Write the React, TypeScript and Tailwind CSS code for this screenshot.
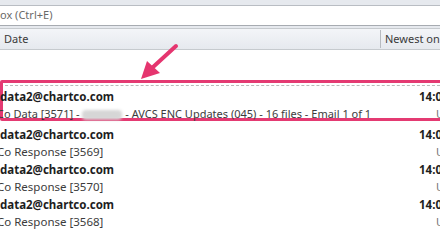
import React from "react";

const font = { fontFamily: '"Noto Sans", "Open Sans", sans-serif' };

function Row({ sub, first }: { sub: React.ReactNode; first?: boolean }) {
  return (
    <div className={first ? "h-[37px] pt-[3px]" : "h-[35px] pt-[4px]"}>
      <div className="relative h-[16px]">
        <span className="absolute left-0 top-0 font-bold text-[11.5px] text-[#1e1e1e] leading-[16px] whitespace-nowrap">data2@chartco.com</span>
        <span className="absolute left-[419px] top-0 font-bold text-[11.5px] text-[#1e1e1e] leading-[16px] whitespace-nowrap">14:05</span>
      </div>
      <div className="relative h-[16px] mt-[1px]">
        <span className={`absolute left-[-3px] top-0 ${first ? "text-[11px]" : "text-[11.5px]"} text-[#3c3c3c] leading-[16px] whitespace-nowrap`}>{sub}</span>
        <span className="absolute left-[436px] top-0 text-[11px] text-[#777] leading-[16px]">U</span>
      </div>
    </div>
  );
}

export default function App() {
  return (
    <div className="w-[440px] h-[241px] overflow-hidden bg-white relative" style={font}>
      <div className="h-[6px] bg-[#e6e9ee] border-b border-[#b9bdc3]" />
      <div className="h-[20px] bg-white flex items-center text-[11px] text-[#6a6a6a] border-b border-[#a7abb1]">
        <span className="whitespace-nowrap">ox (Ctrl+E)</span>
      </div>
      <div className="h-[2px] bg-[#e6e9ee]" />
      <div className="h-[22px] bg-gradient-to-b from-[#f3f5f8] to-[#e6e9ee] border-t border-b border-[#c6cace] flex items-center text-[11px] text-[#3a3a3a]">
        <span className="ml-[4px] flex-1">Date</span>
        <div className="w-px h-[18px] bg-[#b7bbc0]" />
        <span className="ml-[4px] w-[55px] whitespace-nowrap">Newest on</span>
      </div>
      <div className="h-[30px]" />
      <div className="relative">
        <div className="absolute left-0 top-0 w-[460px] h-[41px] border-[3px] border-[#e43a72] rounded-[2px] pointer-events-none" />
        <div className="pt-[5px]">
          <div className="border-t border-dashed border-[#b9b9b9]" />
          <Row
            first
            sub={
              <>
                Co Data [3571] -{" "}
                <span className="inline-block w-[40px] h-[10px] align-middle bg-[#d6d6d6] blur-[1.5px] rounded-sm" />{" "}
                - AVCS ENC Updates (045) - 16 files - Email 1 of 1
              </>
            }
          />
        </div>
      </div>
      <Row sub="Co Response [3569]" />
      <Row sub="Co Response [3570]" />
      <Row sub="Co Response [3568]" />
      <svg className="absolute left-0 top-0" width="440" height="241" viewBox="0 0 440 241">
        <line x1="176" y1="46" x2="152" y2="68" stroke="#e5356f" strokeWidth="4" strokeLinecap="round" />
        <polygon points="141,79 147,61 160,73" fill="#e5356f" />
      </svg>
    </div>
  );
}
